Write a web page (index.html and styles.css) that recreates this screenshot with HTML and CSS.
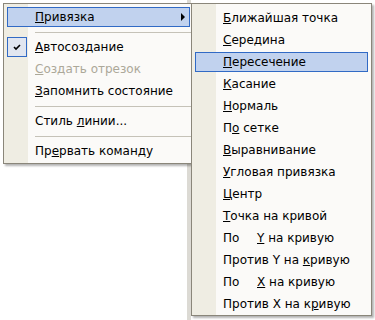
FILE: index.html
```html
<!DOCTYPE html>
<html>
<head>
<meta charset="utf-8">
<link rel="stylesheet" href="styles.css">
</head>
<body>
<div class="screen">
  <div class="menu main">
    <div class="item hl"><span class="icon"></span><span class="label"><u>П</u>ривязка</span><span class="arrow"></span></div>
    <div class="sep"></div>
    <div class="item"><span class="icon checked"><svg width="8" height="7" viewBox="0 0 8 7"><path d="M1 3 L3 5 L7 1" fill="none" stroke="#000" stroke-width="1.6"/></svg></span><span class="label"><u>А</u>втосоздание</span></div>
    <div class="item disabled"><span class="icon"></span><span class="label"><u>С</u>оздать отрезок</span></div>
    <div class="item"><span class="icon"></span><span class="label"><u>З</u>апомнить состояние</span></div>
    <div class="sep"></div>
    <div class="item"><span class="icon"></span><span class="label">Стиль <u>л</u>инии...</span></div>
    <div class="sep"></div>
    <div class="item"><span class="icon"></span><span class="label">Пр<u>е</u>рвать команду</span></div>
  </div>
  <div class="menu sub">
    <div class="item"><span class="icon"></span><span class="label"><u>Б</u>лижайшая точка</span></div>
    <div class="item"><span class="icon"></span><span class="label"><u>С</u>ередина</span></div>
    <div class="item hl"><span class="icon"></span><span class="label"><u>П</u>ересечение</span></div>
    <div class="item"><span class="icon"></span><span class="label"><u>К</u>асание</span></div>
    <div class="item"><span class="icon"></span><span class="label"><u>Н</u>ормаль</span></div>
    <div class="item"><span class="icon"></span><span class="label">П<u>о</u> сетке</span></div>
    <div class="item"><span class="icon"></span><span class="label"><u>В</u>ыравнивание</span></div>
    <div class="item"><span class="icon"></span><span class="label"><u>У</u>гловая привязка</span></div>
    <div class="item"><span class="icon"></span><span class="label"><u>Ц</u>ентр</span></div>
    <div class="item"><span class="icon"></span><span class="label"><u>Т</u>очка на кривой</span></div>
    <div class="item"><span class="icon"></span><span class="label"><span class="tab">По</span><u>Y</u> на кривую</span></div>
    <div class="item"><span class="icon"></span><span class="label">Против Y на <u>к</u>ривую</span></div>
    <div class="item"><span class="icon"></span><span class="label"><span class="tab">По</span><u>X</u> на кривую</span></div>
    <div class="item"><span class="icon"></span><span class="label">Против X на к<u>р</u>ивую</span></div>
  </div>
</div>
</body>
</html>
```

FILE: styles.css
```css
html, body {
  margin: 0;
  padding: 0;
}
body {
  width: 375px;
  height: 320px;
  overflow: hidden;
  background: linear-gradient(to right, #ffffff 187px, #dcdad4 187px, #dcdad4 191px, #ffffff 191px);
  font-family: "DejaVu Sans", sans-serif;
  font-size: 12px;
  color: #000;
}
.screen {
  display: flex;
  align-items: flex-start;
  padding: 3px 0 0 3px;
}
.menu {
  box-sizing: border-box;
  display: flex;
  flex-direction: column;
  border: 1px solid #8a867a;
  background: linear-gradient(to right, #efede3 24px, #fbfaf8 24px);
  box-shadow: 2px 2px 2px rgba(0, 0, 0, 0.3);
}
.main {
  width: 191px;
  padding: 2px 0 1px;
}
.sub {
  width: 181px;
  margin-left: -3px;
  padding: 3px 0 0;
}
.item {
  box-sizing: border-box;
  height: 20px;
  margin: 1px 3px;
  border: 1px solid transparent;
  display: flex;
  align-items: center;
  white-space: pre;
}
.item.hl {
  background: #c1d2ee;
  border-color: #316ac5;
}
.icon {
  box-sizing: border-box;
  flex: none;
  width: 20px;
  height: 20px;
  margin-left: -1px;
  display: flex;
  align-items: center;
  justify-content: center;
}
.icon.checked {
  border: 1px solid #316ac5;
  background: #e1e6f0;
}
.label {
  margin-left: 8px;
  flex: 1;
}
.tab {
  display: inline-block;
  width: 34px;
}
.disabled .label {
  color: #aca899;
}
.arrow {
  flex: none;
  width: 0;
  height: 0;
  border-left: 4px solid #000;
  border-top: 4px solid transparent;
  border-bottom: 4px solid transparent;
  margin-right: 4px;
}
.sep {
  flex: none;
  height: 1px;
  background: #c5c2b8;
  margin: 4px 0 3px 31px;
}
```
